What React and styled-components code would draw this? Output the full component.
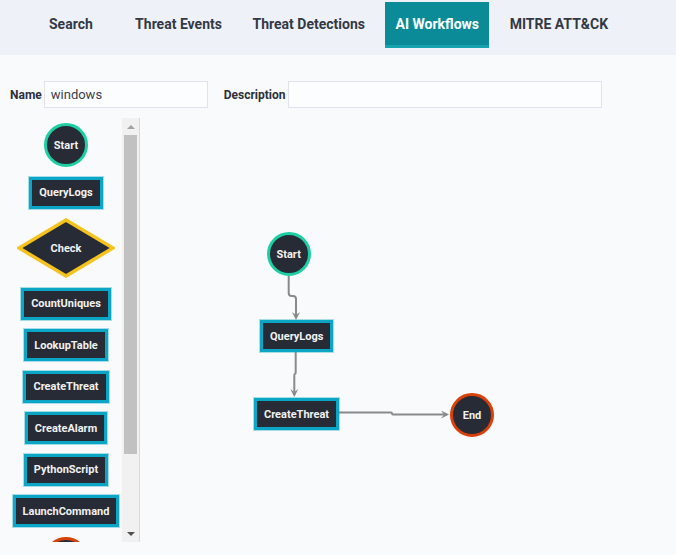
import styled, { createGlobalStyle } from 'styled-components';

const GlobalStyle = createGlobalStyle`
  html, body {
    margin: 0;
    padding: 0;
    background: #f9fafc;
    font-family: Roboto, "Liberation Sans", sans-serif;
  }
  * { box-sizing: border-box; }
`;

const tabs = ['Search', 'Threat Events', 'Threat Detections', 'AI Workflows', 'MITRE ATT&CK'];

const paletteNodes = [
  { label: 'Start', kind: 'start' },
  { label: 'QueryLogs', kind: 'task' },
  { label: 'Check', kind: 'check' },
  { label: 'CountUniques', kind: 'task' },
  { label: 'LookupTable', kind: 'task' },
  { label: 'CreateThreat', kind: 'task' },
  { label: 'CreateAlarm', kind: 'task' },
  { label: 'PythonScript', kind: 'task' },
  { label: 'LaunchCommand', kind: 'task' },
  { label: 'End', kind: 'end' },
];

const Arrow = ({ x, y, dir }) => {
  // small vee shaped arrow head, tip at (x, y)
  const d =
    dir === 'down'
      ? `M${x - 4} ${y - 8} L${x} ${y} L${x + 4} ${y - 8} L${x} ${y - 5} Z`
      : `M${x - 8} ${y - 4} L${x} ${y} L${x - 8} ${y + 4} L${x - 5} ${y} Z`;
  return <path d={d} fill="#8a8a8a" />;
};

const App = () => {
  return (
    <>
      <GlobalStyle />
      <Header>
        <Nav>
          {tabs.map((t, i) => (
            <Tab key={t} $active={t === 'AI Workflows'} $first={i === 0}>
              {t}
            </Tab>
          ))}
        </Nav>
      </Header>

      <FormRow>
        <Label>Name</Label>
        <Input $width={164} defaultValue="windows" />
        <Label $gap>Description</Label>
        <Input $width={314} defaultValue="" />
      </FormRow>

      <Workspace>
        <Palette>
          <PaletteList>
            {paletteNodes.map((n) => {
              if (n.kind === 'check') {
                return (
                  <Diamond key={n.label} width="98" height="60" viewBox="0 0 98 60">
                    <polygon points="49,2 96,30 49,58 2,30" fill="#272b35" stroke="#f6c21c" strokeWidth="3.5" />
                    <text x="49" y="34" textAnchor="middle" fill="#f1f1f1" fontSize="11" fontWeight="700" fontFamily="Roboto, sans-serif">
                      {n.label}
                    </text>
                  </Diamond>
                );
              }
              if (n.kind === 'task') return <TaskNode key={n.label}>{n.label}</TaskNode>;
              return (
                <CircleNode key={n.label} $kind={n.kind}>
                  {n.label}
                </CircleNode>
              );
            })}
          </PaletteList>
          <ScrollRail>
            <ScrollButton $dir="up" />
            <ScrollTrack>
              <ScrollThumb />
            </ScrollTrack>
            <ScrollButton $dir="down" />
          </ScrollRail>
        </Palette>

        <Canvas>
          <Edges width="536" height="437">
            <path d="M148.7 158 V175 Q148.7 178 151.7 178 H153 Q156 178 156 181 V200" stroke="#8a8a8a" strokeWidth="2" fill="none" />
            <Arrow x={156} y={202} dir="down" />
            <path d="M155.7 234 V254 Q155.7 256 154.5 256 Q154.3 256 154.3 258 V277" stroke="#8a8a8a" strokeWidth="2" fill="none" />
            <Arrow x={154.3} y={279} dir="down" />
            <path d="M197 294.5 H251 Q252 294.5 252 295.5 Q252 296.5 253 296.5 H307" stroke="#8a8a8a" strokeWidth="2" fill="none" />
            <Arrow x={309} y={296.5} dir="right" />
          </Edges>
          <CircleNode $kind="start" $x={126.7} $y={114}>Start</CircleNode>
          <TaskNode $x={120} $y={202}>QueryLogs</TaskNode>
          <TaskNode $x={114} $y={280}>CreateThreat</TaskNode>
          <CircleNode $kind="end" $x={310} $y={275}>End</CircleNode>
        </Canvas>
      </Workspace>
    </>
  );
};

const Header = styled.header`
  height: 55px;
  background: #eef1f8;
  padding-top: 2px;
`;

const Nav = styled.nav`
  display: flex;
  align-items: flex-start;
  gap: 10px;
  padding-left: 27px;
`;

const Tab = styled.div`
  height: 46px;
  padding: 0 ${(p) => (p.$first ? '22px' : '10.3px')};
  display: flex;
  align-items: center;
  font-size: 14px;
  font-weight: 700;
  color: ${(p) => (p.$active ? '#ffffff' : '#333944')};
  background: ${(p) => (p.$active ? '#0b8b97' : 'transparent')};
  border-bottom: 3px solid ${(p) => (p.$active ? '#17a3ae' : 'transparent')};
  cursor: pointer;
`;

const FormRow = styled.div`
  display: flex;
  align-items: center;
  margin-top: 26px;
  padding-left: 10px;
`;

const Label = styled.label`
  font-size: 12px;
  font-weight: 700;
  color: #2b303b;
  margin-right: 2px;
  margin-left: ${(p) => (p.$gap ? '16px' : '0')};
`;

const Input = styled.input`
  width: ${(p) => p.$width}px;
  height: 27px;
  border: 1px solid #dfe2ef;
  background: #fcfdff;
  padding: 0 6px;
  font-family: Roboto, "Liberation Sans", sans-serif;
  font-size: 13px;
  color: #3a3f4a;
  outline: none;
`;

const Workspace = styled.div`
  display: flex;
  margin-top: 10px;
  height: 437px;
  overflow: hidden;
`;

const Palette = styled.div`
  width: 140px;
  height: 424px;
  flex-shrink: 0;
  display: flex;
  border-right: 1px solid #d9d9d9;
`;

const PaletteList = styled.div`
  flex: 1;
  height: 100%;
  overflow: hidden;
  padding: 5px 0 0 10px;
  display: flex;
  flex-direction: column;
  align-items: center;
  gap: 9.5px;
`;

const ScrollRail = styled.div`
  width: 17px;
  flex-shrink: 0;
  background: #f1f1f1;
  display: flex;
  flex-direction: column;
`;

const ScrollButton = styled.div`
  height: 17px;
  display: flex;
  align-items: center;
  justify-content: center;

  &::before {
    content: '';
    width: 0;
    height: 0;
    border-left: 4px solid transparent;
    border-right: 4px solid transparent;
    ${(p) =>
      p.$dir === 'up'
        ? 'border-bottom: 4px solid #a3a3a3;'
        : 'border-top: 4px solid #505050;'}
  }
`;

const ScrollTrack = styled.div`
  flex: 1;
  padding: 0 2px;
`;

const ScrollThumb = styled.div`
  height: 319px;
  background: #c1c1c1;
`;

const nodePlacement = (p) =>
  p.$x !== undefined
    ? `position: absolute; left: ${p.$x}px; top: ${p.$y}px;`
    : '';

const TaskNode = styled.div`
  ${nodePlacement}
  flex-shrink: 0;
  height: 32px;
  padding: 0 7px;
  display: flex;
  align-items: center;
  background: #272b35;
  border: 3px solid #0ba6c6;
  box-shadow: 0 0 0 1px rgba(11, 166, 198, 0.35);
  color: #f1f1f1;
  font-size: 11px;
  font-weight: 700;
  white-space: nowrap;
  cursor: grab;
`;

const CircleNode = styled.div`
  ${nodePlacement}
  flex-shrink: 0;
  width: 44px;
  height: 44px;
  border-radius: 50%;
  display: flex;
  align-items: center;
  justify-content: center;
  background: #272b35;
  border: 3.5px solid ${(p) => (p.$kind === 'end' ? '#d9410c' : '#1ccfa4')};
  color: #f1f1f1;
  font-size: 11px;
  font-weight: 700;
  cursor: grab;
`;

const Diamond = styled.svg`
  flex-shrink: 0;
  display: block;
  cursor: grab;
`;

const Canvas = styled.div`
  position: relative;
  flex: 1;
  height: 437px;
`;

const Edges = styled.svg`
  position: absolute;
  left: 0;
  top: 0;
`;

export default App;
